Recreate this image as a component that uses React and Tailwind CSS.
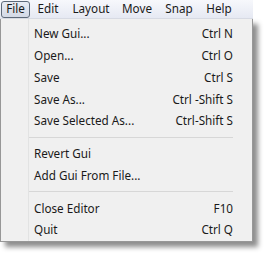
import React from 'react';

const items = [
  { label: 'New Gui...', key: 'Ctrl N' },
  { label: 'Open...', key: 'Ctrl O' },
  { label: 'Save', key: 'Ctrl S' },
  { label: 'Save As...', key: 'Ctrl -Shift S' },
  { label: 'Save Selected As...', key: 'Ctrl-Shift S' },
  'sep',
  { label: 'Revert Gui', key: '' },
  { label: 'Add Gui From File...', key: '' },
  'sep',
  { label: 'Close Editor', key: 'F10' },
  { label: 'Quit', key: 'Ctrl Q' },
];

export default function App() {
  return (
    <div className="w-[269px] h-[254px] bg-white text-[11.7px] text-[#1a1a1a]" style={{ fontFamily: '"Noto Sans", "Open Sans", sans-serif' }}>
      <div className="w-[253px] h-[19px] flex items-center pl-[1px] bg-gradient-to-b from-[#f7f8fc] to-[#e6e9f3] border-b border-[#d8dbe4]">
        <div className="w-[29px] h-[17px] flex items-center justify-center rounded-[3px] border border-[#5e6a7a] bg-gradient-to-b from-[#e8ecf4] to-[#d3d9e6]">File</div>
        <div className="w-[36px] text-center">Edit</div>
        <div className="w-[50px] text-center">Layout</div>
        <div className="w-[42px] text-center">Move</div>
        <div className="w-[42px] text-center">Snap</div>
        <div className="w-[38px] text-center">Help</div>
      </div>
      <div className="w-[253px] h-[223px] border border-[#979797] border-t-0 bg-[#f0f0f0] flex shadow-[5px_5px_5px_rgba(0,0,0,0.45)]">
        <div className="w-[28px] border-r border-[#e2e3e3] shrink-0" />
        <div className="flex-1 flex flex-col pt-[4px] pl-[5px] pr-[19px]">
          {items.map((it, i) =>
            it === 'sep' ? (
              <div key={i} className="h-[11px] flex items-center -ml-[5px]">
                <div className="w-full border-t border-[#d7d7d7]" />
              </div>
            ) : (
              <div key={i} className="h-[22px] flex items-center justify-between">
                <span>{it.label}</span>
                <span>{it.key}</span>
              </div>
            )
          )}
        </div>
      </div>
    </div>
  );
}
